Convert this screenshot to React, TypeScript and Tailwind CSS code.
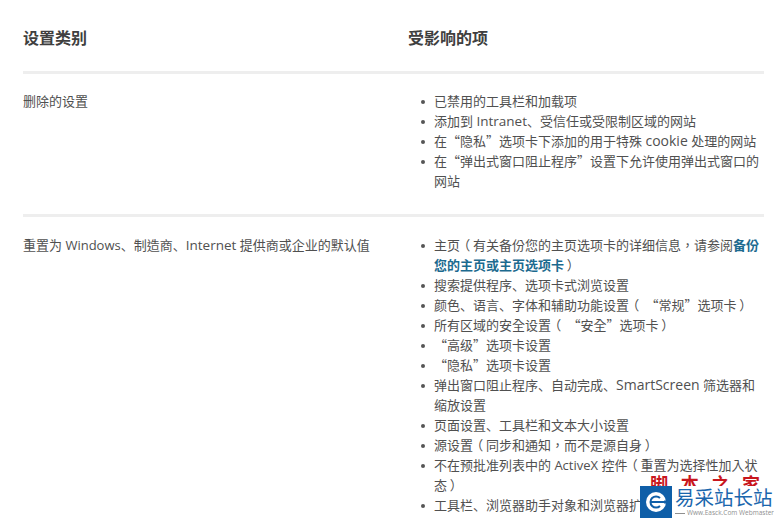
import type { ReactNode } from 'react';

const latin = '"Open Sans", "Noto Sans CJK TC", sans-serif';
const sc = '"Noto Sans CJK SC", sans-serif';

const wordSize: Record<string, string> = {
  Windows: 'text-[13px]',
  Internet: 'text-[13.5px]',
  Intranet: 'text-[13.5px]',
  ActiveX: 'text-[13px]',
  cookie: 'text-[14px]',
  SmartScreen: 'text-[14px]',
};

function T({ children }: { children: string }) {
  const parts = children.split(/([A-Za-z]+|[“”、（）])/);
  return (
    <>
      {parts.map((p, i) => {
        if (/^[A-Za-z]+$/.test(p)) return <span key={i} className={wordSize[p]}>{p}</span>;
        if (/^[“”、]$/.test(p)) return <span key={i} style={{ fontFamily: sc }}>{p}</span>;
        if (p === '（' || p === '）')
          return (
            <span key={i} className="inline-block w-[13px] text-center [font-feature-settings:'palt']" style={{ fontFamily: sc }}>
              {p}
            </span>
          );
        return p;
      })}
    </>
  );
}

function Bullets({ items }: { items: ReactNode[] }) {
  return (
    <ul>
      {items.map((t, i) => (
        <li key={i} className="flex">
          <span className="ml-[13px] mr-[9px] mt-[9px] h-[4px] w-[4px] shrink-0 rounded-full bg-[#555555]" />
          <div>{t}</div>
        </li>
      ))}
    </ul>
  );
}

const first = [
  <T>已禁用的工具栏和加载项</T>,
  <T>添加到 Intranet、受信任或受限制区域的网站</T>,
  <T>在“隐私”选项卡下添加的用于特殊 cookie 处理的网站</T>,
  <T>在“弹出式窗口阻止程序”设置下允许使用弹出式窗口的网站</T>,
];

const second = [
  <>
    <T>主页（有关备份您的主页选项卡的详细信息，请参阅</T>
    <a className="font-bold text-[#1c6a8f]">备份您的主页或主页选项卡</a>
    <T>）</T>
  </>,
  <T>搜索提供程序、选项卡式浏览设置</T>,
  <T>颜色、语言、字体和辅助功能设置（ “常规”选项卡）</T>,
  <T>所有区域的安全设置（ “安全”选项卡）</T>,
  <T>“高级”选项卡设置</T>,
  <T>“隐私”选项卡设置</T>,
  <T>弹出窗口阻止程序、自动完成、SmartScreen 筛选器和缩放设置</T>,
  <T>页面设置、工具栏和文本大小设置</T>,
  <T>源设置（同步和通知，而不是源自身）</T>,
  <T>不在预批准列表中的 ActiveX 控件（重置为选择性加入状态）</T>,
  <T>工具栏、浏览器助手对象和浏览器扩展</T>,
];

export default function App() {
  return (
    <div
      className="relative h-[518px] w-[774px] overflow-hidden bg-white pl-[23px] pr-[10px] text-[13px] leading-[20px] text-[#505050] [text-spacing-trim:space-all]"
      style={{ fontFamily: latin }}
    >
      <div className="grid h-[74px] grid-cols-[385px_1fr] border-b-[3px] border-[#eeeeee] pt-[26px] text-[16px] font-bold leading-[24px] text-[#3f3f3f]">
        <div>设置类别</div>
        <div>受影响的项</div>
      </div>
      <div className="grid h-[143px] grid-cols-[385px_1fr] border-b-[3px] border-[#eeeeee] pt-[17px]">
        <div><T>删除的设置</T></div>
        <Bullets items={first} />
      </div>
      <div className="grid grid-cols-[385px_1fr] pt-[18px]">
        <div><T>重置为 Windows、制造商、Internet 提供商或企业的默认值</T></div>
        <Bullets items={second} />
      </div>

      <div className="absolute bottom-0 right-0 flex h-[32px] w-[134px] bg-white">
        <div className="flex h-[32px] w-[32px] shrink-0 items-center justify-center bg-[#0f5fa8]">
          <svg width="22" height="22" viewBox="0 0 22 22">
            <circle cx="11" cy="11" r="10" fill="#fff" />
            <path d="M19 9.5 H22 V12.5 H19 Z" fill="#0f5fa8" />
            <path d="M6.5 11 H19 M15 7 A5.6 5.6 0 1 0 15 15" fill="none" stroke="#0f5fa8" strokeWidth="2" />
          </svg>
        </div>
        <div className="flex min-w-0 flex-col pl-[3px]">
          <div className="whitespace-nowrap text-[19.5px] leading-[23px] text-[#1a66ad]">易采站长站</div>
          <div className="flex items-center whitespace-nowrap text-[6.5px] leading-[8px] text-[#8f8f8f]">
            <span className="mr-[2px] h-px w-[17px] bg-[#8f8f8f]" />
            Www.Easck.Com Webmaster
          </div>
        </div>
      </div>
      <div className="absolute bottom-[32px] right-[14px] h-[14px] w-[110px] overflow-hidden">
        <div className="flex justify-between text-[18px] font-bold leading-[22px] text-[#c8161d]" style={{ fontFamily: sc }}>
          <span>脚</span><span>本</span><span>之</span><span>家</span>
        </div>
      </div>
    </div>
  );
}
